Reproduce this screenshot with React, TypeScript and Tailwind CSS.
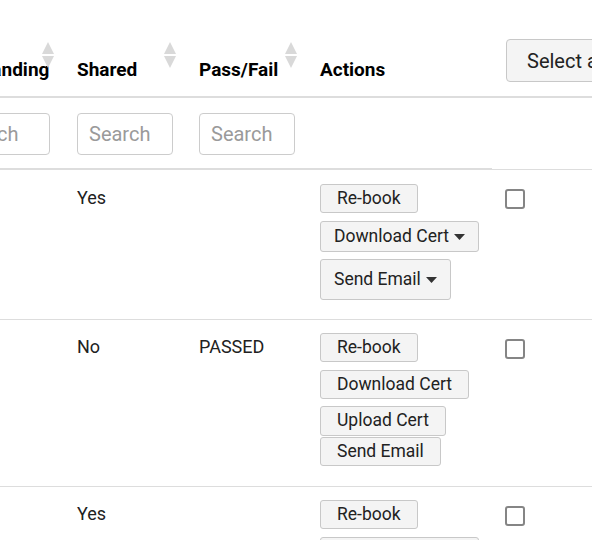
import React from "react";

function SortIcon() {
  return (
    <svg className="absolute top-[42px] right-[11px]" width="12" height="26" viewBox="0 0 12 26">
      <polygon points="6,0 12,12 0,12" fill="#d9d9d9" />
      <polygon points="0,14 12,14 6,26" fill="#d9d9d9" />
    </svg>
  );
}

function Caret() {
  return (
    <svg className="ml-[5px]" width="11" height="6" viewBox="0 0 11 6">
      <polygon points="0,0 11,0 5.5,6" fill="#333" />
    </svg>
  );
}

function Btn({ children, h = "h-[29px]", className = "" }: { children: React.ReactNode; h?: string; className?: string }) {
  return (
    <button
      className={`${h} ${className} px-4 border border-[#c8c8c8] rounded-[3px] bg-[#f4f4f4] text-[17.5px] text-[#222] leading-none flex items-center whitespace-nowrap`}
    >
      {children}
    </button>
  );
}

function DropBtn({ children, h, className = "" }: { children: React.ReactNode; h: string; className?: string }) {
  return (
    <button
      className={`${h} ${className} pl-[13px] pr-[13px] border border-[#c8c8c8] rounded-[3px] bg-[#f4f4f4] text-[17.5px] text-[#222] leading-none flex items-center whitespace-nowrap`}
    >
      {children}
      <Caret />
    </button>
  );
}

function Checkbox({ className = "" }: { className?: string }) {
  return <div className={`w-5 h-5 border-2 border-[#858585] rounded-[3px] bg-white ${className}`} />;
}

function HeaderCell({ label, w }: { label: string; w: string }) {
  return (
    <div className={`${w} h-[96px] relative flex items-end pl-3 pb-[12px] shrink-0`}>
      <span className="text-[19px] font-bold leading-[28px] text-black whitespace-nowrap">{label}</span>
      <SortIcon />
    </div>
  );
}

function FilterCell({ w, inputW }: { w: string; inputW: string }) {
  return (
    <div className={`${w} h-[72px] pl-3 pt-[15px] border-b-2 border-[#dddddd] shrink-0`}>
      <input
        placeholder="Search"
        className={`${inputW} h-[42px] border border-[#cccccc] rounded-[4px] pl-[11px] text-[20px] placeholder:text-[#9a9a9a] outline-none bg-white`}
      />
    </div>
  );
}

function TextCell({ w, text }: { w: string; text?: string }) {
  return (
    <div className={`${w} pl-3 shrink-0`}>
      {text ? <span className="text-[18px] leading-[27px] text-[#212121]">{text}</span> : null}
    </div>
  );
}

export default function App() {
  return (
    <div className="w-[592px] h-[540px] overflow-hidden bg-white font-['Roboto',sans-serif] text-[#212121]">
      <div className="ml-[-67px] w-[759px]">
        {/* header */}
        <div className="flex border-b-2 border-[#dddddd]">
          <HeaderCell label="Outstanding" w="w-[132px]" />
          <HeaderCell label="Shared" w="w-[122px]" />
          <HeaderCell label="Pass/Fail" w="w-[121px]" />
          <div className="w-[184px] h-[96px] flex items-end pl-3 pb-[12px] shrink-0">
            <span className="text-[19px] font-bold leading-[28px] text-black">Actions</span>
          </div>
          <div className="w-[200px] h-[96px] pl-[14px] pt-[39px] shrink-0">
            <button className="h-[43px] px-5 border border-[#c8c8c8] rounded-[4px] bg-[#f4f4f4] text-[20px] text-[#222] whitespace-nowrap leading-none">
              Select all
            </button>
          </div>
        </div>

        {/* filters */}
        <div className="flex">
          <FilterCell w="w-[132px]" inputW="w-[105px]" />
          <FilterCell w="w-[122px]" inputW="w-[96px]" />
          <FilterCell w="w-[121px]" inputW="w-[96px]" />
          <div className="w-[184px] h-[72px] border-b-2 border-[#dddddd] shrink-0" />
          <div className="w-[200px] h-[72px] border-b border-[#dddddd] shrink-0" />
        </div>

        {/* row 1 */}
        <div className="flex border-b border-[#dddddd] pt-[14px] pb-[19px]">
          <TextCell w="w-[132px]" />
          <TextCell w="w-[122px]" text="Yes" />
          <TextCell w="w-[121px]" />
          <div className="w-[184px] pl-3 flex flex-col items-start shrink-0">
            <Btn>Re-book</Btn>
            <DropBtn h="h-[31px]" className="mt-[8px]">Download Cert</DropBtn>
            <DropBtn h="h-[41px]" className="mt-[7px]">Send Email</DropBtn>
          </div>
          <div className="w-[200px] pl-[13px] shrink-0">
            <Checkbox className="mt-[5px]" />
          </div>
        </div>

        {/* row 2 */}
        <div className="flex border-b border-[#dddddd] pt-[13px] pb-[20px]">
          <TextCell w="w-[132px]" />
          <TextCell w="w-[122px]" text="No" />
          <TextCell w="w-[121px]" text="PASSED" />
          <div className="w-[184px] pl-3 flex flex-col items-start shrink-0">
            <Btn>Re-book</Btn>
            <Btn className="mt-[8px]">Download Cert</Btn>
            <Btn h="h-[30px]" className="mt-[7px]">Upload Cert</Btn>
            <Btn className="mt-[1px]">Send Email</Btn>
          </div>
          <div className="w-[200px] pl-[13px] shrink-0">
            <Checkbox className="mt-[6px]" />
          </div>
        </div>

        {/* row 3 */}
        <div className="flex border-b border-[#dddddd] pt-[13px] pb-[20px]">
          <TextCell w="w-[132px]" />
          <TextCell w="w-[122px]" text="Yes" />
          <TextCell w="w-[121px]" />
          <div className="w-[184px] pl-3 flex flex-col items-start shrink-0">
            <Btn>Re-book</Btn>
            <DropBtn h="h-[31px]" className="mt-[8px]">Download Cert</DropBtn>
            <DropBtn h="h-[41px]" className="mt-[7px]">Send Email</DropBtn>
          </div>
          <div className="w-[200px] pl-[13px] shrink-0">
            <Checkbox className="mt-[6px]" />
          </div>
        </div>
      </div>
    </div>
  );
}
